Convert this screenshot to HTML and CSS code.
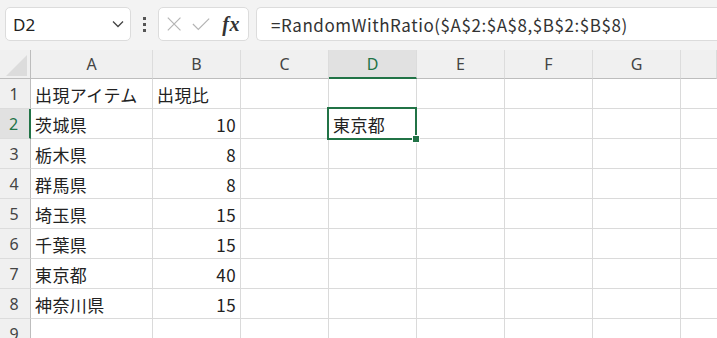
FILE: index.html
```html
<!doctype html>
<html lang="ja">
  <head>
    <meta charset="UTF-8" />
    <title>Sheet</title>
    <link rel="stylesheet" href="styles.css">
  </head>
  <body>
    <div class="toolbar">
      <div class="name-box">
        <span>D2</span>
        <svg class="chevron" width="12" height="8" viewBox="0 0 12 8"><path d="M1 1.5 L6 6.5 L11 1.5" fill="none" stroke="#444" stroke-width="1.3"/></svg>
      </div>
      <div class="dots"><i></i><i></i><i></i></div>
      <div class="fx-box">
        <svg width="18" height="18" viewBox="0 0 18 18"><path d="M2 2 L16 16 M16 2 L2 16" stroke="#b4b4b4" stroke-width="1.3" fill="none"/></svg>
        <svg width="20" height="18" viewBox="0 0 20 18"><path d="M1 9 L7 15 L19 3" stroke="#b4b4b4" stroke-width="1.3" fill="none"/></svg>
        <span class="fx">fx</span>
      </div>
      <div class="formula">=RandomWithRatio($A$2:$A$8,$B$2:$B$8)</div>
    </div>

    <div class="sheet">
      <div class="corner"><span class="tri"></span></div>
      <div class="col-head">A</div>
      <div class="col-head">B</div>
      <div class="col-head">C</div>
      <div class="col-head active">D</div>
      <div class="col-head">E</div>
      <div class="col-head">F</div>
      <div class="col-head">G</div>
      <div class="col-head last"></div>

      <div class="row-head">1</div>
      <div class="cell">出現アイテム</div><div class="cell">出現比</div><div class="cell"></div><div class="cell"></div><div class="cell"></div><div class="cell"></div><div class="cell"></div><div class="cell last"></div>

      <div class="row-head active">2</div>
      <div class="cell">茨城県</div><div class="cell num">10</div><div class="cell"></div><div class="cell selected">東京都</div><div class="cell"></div><div class="cell"></div><div class="cell"></div><div class="cell last"></div>

      <div class="row-head">3</div>
      <div class="cell">栃木県</div><div class="cell num">8</div><div class="cell"></div><div class="cell"></div><div class="cell"></div><div class="cell"></div><div class="cell"></div><div class="cell last"></div>

      <div class="row-head">4</div>
      <div class="cell">群馬県</div><div class="cell num">8</div><div class="cell"></div><div class="cell"></div><div class="cell"></div><div class="cell"></div><div class="cell"></div><div class="cell last"></div>

      <div class="row-head">5</div>
      <div class="cell">埼玉県</div><div class="cell num">15</div><div class="cell"></div><div class="cell"></div><div class="cell"></div><div class="cell"></div><div class="cell"></div><div class="cell last"></div>

      <div class="row-head">6</div>
      <div class="cell">千葉県</div><div class="cell num">15</div><div class="cell"></div><div class="cell"></div><div class="cell"></div><div class="cell"></div><div class="cell"></div><div class="cell last"></div>

      <div class="row-head">7</div>
      <div class="cell">東京都</div><div class="cell num">40</div><div class="cell"></div><div class="cell"></div><div class="cell"></div><div class="cell"></div><div class="cell"></div><div class="cell last"></div>

      <div class="row-head">8</div>
      <div class="cell">神奈川県</div><div class="cell num">15</div><div class="cell"></div><div class="cell"></div><div class="cell"></div><div class="cell"></div><div class="cell"></div><div class="cell last"></div>

      <div class="row-head">9</div>
      <div class="cell"></div><div class="cell"></div><div class="cell"></div><div class="cell"></div><div class="cell"></div><div class="cell"></div><div class="cell"></div><div class="cell last"></div>
    </div>
  </body>
</html>
```

FILE: styles.css
```css
:root {
  font-family: "Noto Sans", sans-serif;
  --green: #217346;
  --grid: #dadada;
}

body {
  margin: 0;
  background: #f3f3f3;
  overflow: hidden;
}

.toolbar {
  display: flex;
  align-items: center;
  height: 50px;
  padding: 0 0 0 5px;
  box-sizing: border-box;
  padding-bottom: 2px;
}

.name-box,
.fx-box,
.formula {
  height: 34px;
  box-sizing: border-box;
  background: #fff;
  border: 1px solid #dcdcdc;
  border-radius: 5px;
  display: flex;
  align-items: center;
}

.name-box {
  width: 126px;
  padding: 0 6px 0 7px;
  justify-content: space-between;
  font-size: 17px;
  color: #222;
}

.dots {
  display: flex;
  flex-direction: column;
  gap: 3px;
  width: 27px;
  align-items: center;
}

.dots i {
  width: 3px;
  height: 3px;
  background: #555;
}

.fx-box {
  width: 91px;
  padding: 0 8px 0 7px;
  gap: 10px;
}

.fx {
  font-family: "Liberation Serif", serif;
  font-style: italic;
  font-weight: bold;
  font-size: 20px;
  color: #333;
  margin-left: 2px;
  letter-spacing: 0.5px;
}

.formula {
  flex: 1;
  margin-left: 7px;
  border-right: none;
  border-radius: 5px 0 0 5px;
  padding-left: 14px;
  font-family: "Noto Sans CJK JP", sans-serif;
  font-size: 17px;
  letter-spacing: 0.55px;
  color: #333;
}

.sheet {
  display: grid;
  grid-template-columns: 31px 122px repeat(6, 88px) 1fr;
  grid-template-rows: 29px repeat(9, 30px);
  background: #fff;
}

.corner,
.col-head {
  background: #f0f0f0;
  border-bottom: 1px solid #bdbdbd;
}

.corner {
  border-right: 1px solid #bdbdbd;
  position: relative;
}

.tri {
  position: absolute;
  right: 3px;
  bottom: 2px;
  width: 0;
  height: 0;
  border-left: 21px solid transparent;
  border-bottom: 21px solid #dcdcdc;
}

.col-head {
  border-right: 1px solid #dcdcdc;
  display: flex;
  align-items: center;
  justify-content: center;
  font-size: 16px;
  color: #444;
}

.col-head.active {
  background: #e1e1e1;
  color: var(--green);
  border-bottom: 2px solid var(--green);
}

.row-head {
  background: #f0f0f0;
  border-right: 1px solid #bdbdbd;
  border-bottom: 1px solid #dcdcdc;
  display: flex;
  align-items: center;
  justify-content: center;
  font-size: 16px;
  color: #444;
  padding-right: 2px;
}

.row-head.active {
  background: #e1e1e1;
  color: var(--green);
  border-right: 2px solid var(--green);
}

.cell {
  border-right: 1px solid var(--grid);
  border-bottom: 1px solid var(--grid);
  font-family: "Noto Sans CJK JP", sans-serif;
  font-size: 17px;
  letter-spacing: 0.4px;
  color: #222;
  display: flex;
  align-items: center;
  padding: 2px 4px 0 4px;
  white-space: nowrap;
  overflow: visible;
}

.cell.num {
  justify-content: flex-end;
}

.cell.last {
  border-right: none;
}

.cell.selected {
  position: relative;
}

.cell.selected::before {
  content: "";
  position: absolute;
  left: -2px;
  top: -2px;
  right: -1px;
  bottom: -2px;
  border: 2px solid var(--green);
}

.cell.selected::after {
  content: "";
  position: absolute;
  right: -4px;
  bottom: -5px;
  width: 6px;
  height: 6px;
  background: var(--green);
  border: 1px solid #fff;
}
```
